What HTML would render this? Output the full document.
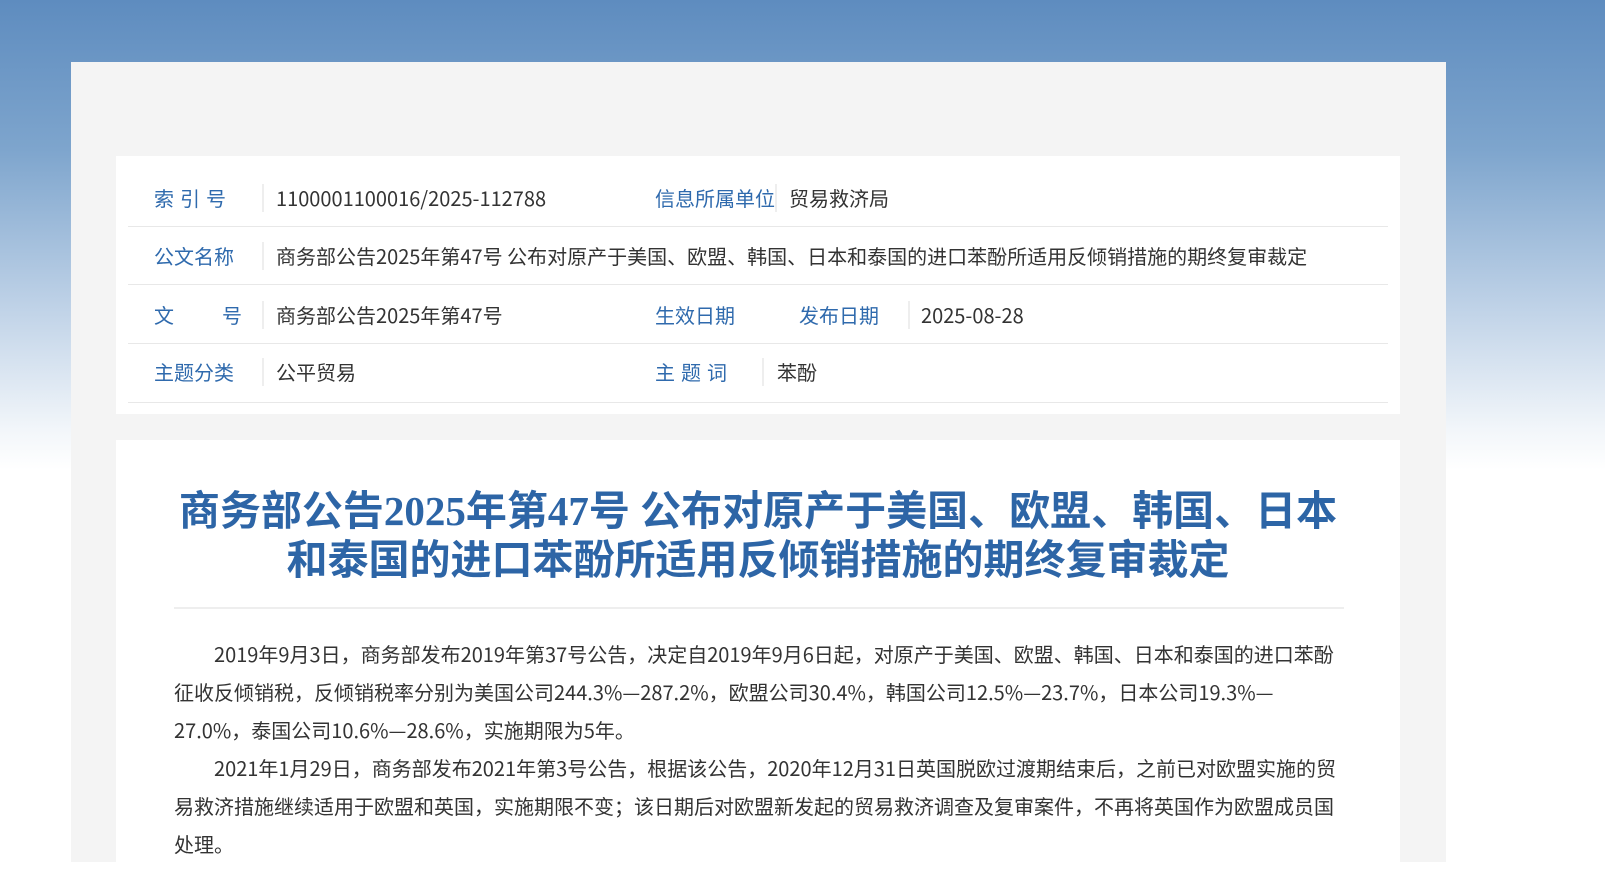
<!DOCTYPE html>
<html style="width:1605px;height:862px;background:#fff"><head><meta charset="utf-8"><style>
*{margin:0;padding:0;box-sizing:border-box}
body{width:1605px;height:862px;overflow:hidden;font-family:"Noto Sans CJK SC","Liberation Sans",sans-serif;background:linear-gradient(#5e8cbf 0px,#7ea5cd 150px,#bcd0e6 300px,#f2f6fa 430px,#fff 470px) no-repeat;background-size:1605px 862px;position:relative}
.panel{position:absolute;left:71px;top:62px;width:1375px;height:800px;background:#f4f4f4}
.info{position:absolute;left:116px;top:156px;width:1284px;height:258px;background:#fff}
.line{position:absolute;left:12px;width:1260px;height:1px;background:#e8e8e8}
.t{position:absolute;font-size:20px;line-height:28px;white-space:nowrap}
.l{color:#2f6aad}
.v{color:#333}
.sep{position:absolute;width:2px;height:28px;background:#eee}
.art{position:absolute;left:116px;top:440px;width:1284px;height:430px;background:#fff}
h1{position:absolute;left:0;width:1284px;top:487px;text-align:center;font-size:41px;line-height:49px;color:#2d65a6;font-weight:bold;font-family:"Liberation Serif","Noto Sans CJK SC",sans-serif;white-space:nowrap}
.hr{position:absolute;left:174px;top:607px;width:1170px;height:2px;background:#eee}
.body{position:absolute;left:174px;top:635px;font-size:20px;line-height:38px;color:#333;white-space:nowrap}
</style></head><body>
<div class="panel"></div>
<div class="info">
 <div class="line" style="top:70px"></div>
 <div class="line" style="top:128px"></div>
 <div class="line" style="top:187px"></div>
 <div class="line" style="top:246px"></div>

 <span class="t l" style="left:38px;top:28px;letter-spacing:6px">索引号</span>
 <div class="sep" style="left:146px;top:28px"></div>
 <span class="t v" style="left:160px;top:28px">1100001100016/2025-112788</span>
 <span class="t l" style="left:539px;top:28px">信息所属单位</span>
 <div class="sep" style="left:659px;top:28px"></div>
 <span class="t v" style="left:673px;top:28px">贸易救济局</span>

 <span class="t l" style="left:38px;top:86px">公文名称</span>
 <div class="sep" style="left:146px;top:86px"></div>
 <span class="t v" style="left:160px;top:86px">商务部公告2025年第47号 公布对原产于美国、欧盟、韩国、日本和泰国的进口苯酚所适用反倾销措施的期终复审裁定</span>

 <span class="t l" style="left:38px;top:145px">文</span>
 <span class="t l" style="left:106px;top:145px">号</span>
 <div class="sep" style="left:146px;top:145px"></div>
 <span class="t v" style="left:160px;top:145px">商务部公告2025年第47号</span>
 <span class="t l" style="left:539px;top:145px">生效日期</span>
 <span class="t l" style="left:683px;top:145px">发布日期</span>
 <div class="sep" style="left:792px;top:145px"></div>
 <span class="t v" style="left:805px;top:145px">2025-08-28</span>

 <span class="t l" style="left:38px;top:202px">主题分类</span>
 <div class="sep" style="left:146px;top:202px"></div>
 <span class="t v" style="left:160px;top:202px">公平贸易</span>
 <span class="t l" style="left:539px;top:202px;letter-spacing:6px">主题词</span>
 <div class="sep" style="left:646px;top:202px"></div>
 <span class="t v" style="left:661px;top:202px">苯酚</span>
</div>
<div class="art"></div>
<h1 style="left:116px">商务部公告2025年第47号 公布对原产于美国、欧盟、韩国、日本<br>和泰国的进口苯酚所适用反倾销措施的期终复审裁定</h1>
<div class="hr"></div>
<div class="body">
&emsp;&emsp;2019年9月3日，商务部发布2019年第37号公告，决定自2019年9月6日起，对原产于美国、欧盟、韩国、日本和泰国的进口苯酚<br>
征收反倾销税，反倾销税率分别为美国公司244.3%—287.2%，欧盟公司30.4%，韩国公司12.5%—23.7%，日本公司19.3%—<br>
27.0%，泰国公司10.6%—28.6%，实施期限为5年。<br>
&emsp;&emsp;2021年1月29日，商务部发布2021年第3号公告，根据该公告，2020年12月31日英国脱欧过渡期结束后，之前已对欧盟实施的贸<br>
易救济措施继续适用于欧盟和英国，实施期限不变；该日期后对欧盟新发起的贸易救济调查及复审案件，不再将英国作为欧盟成员国<br>
处理。
</div>
</body></html>
